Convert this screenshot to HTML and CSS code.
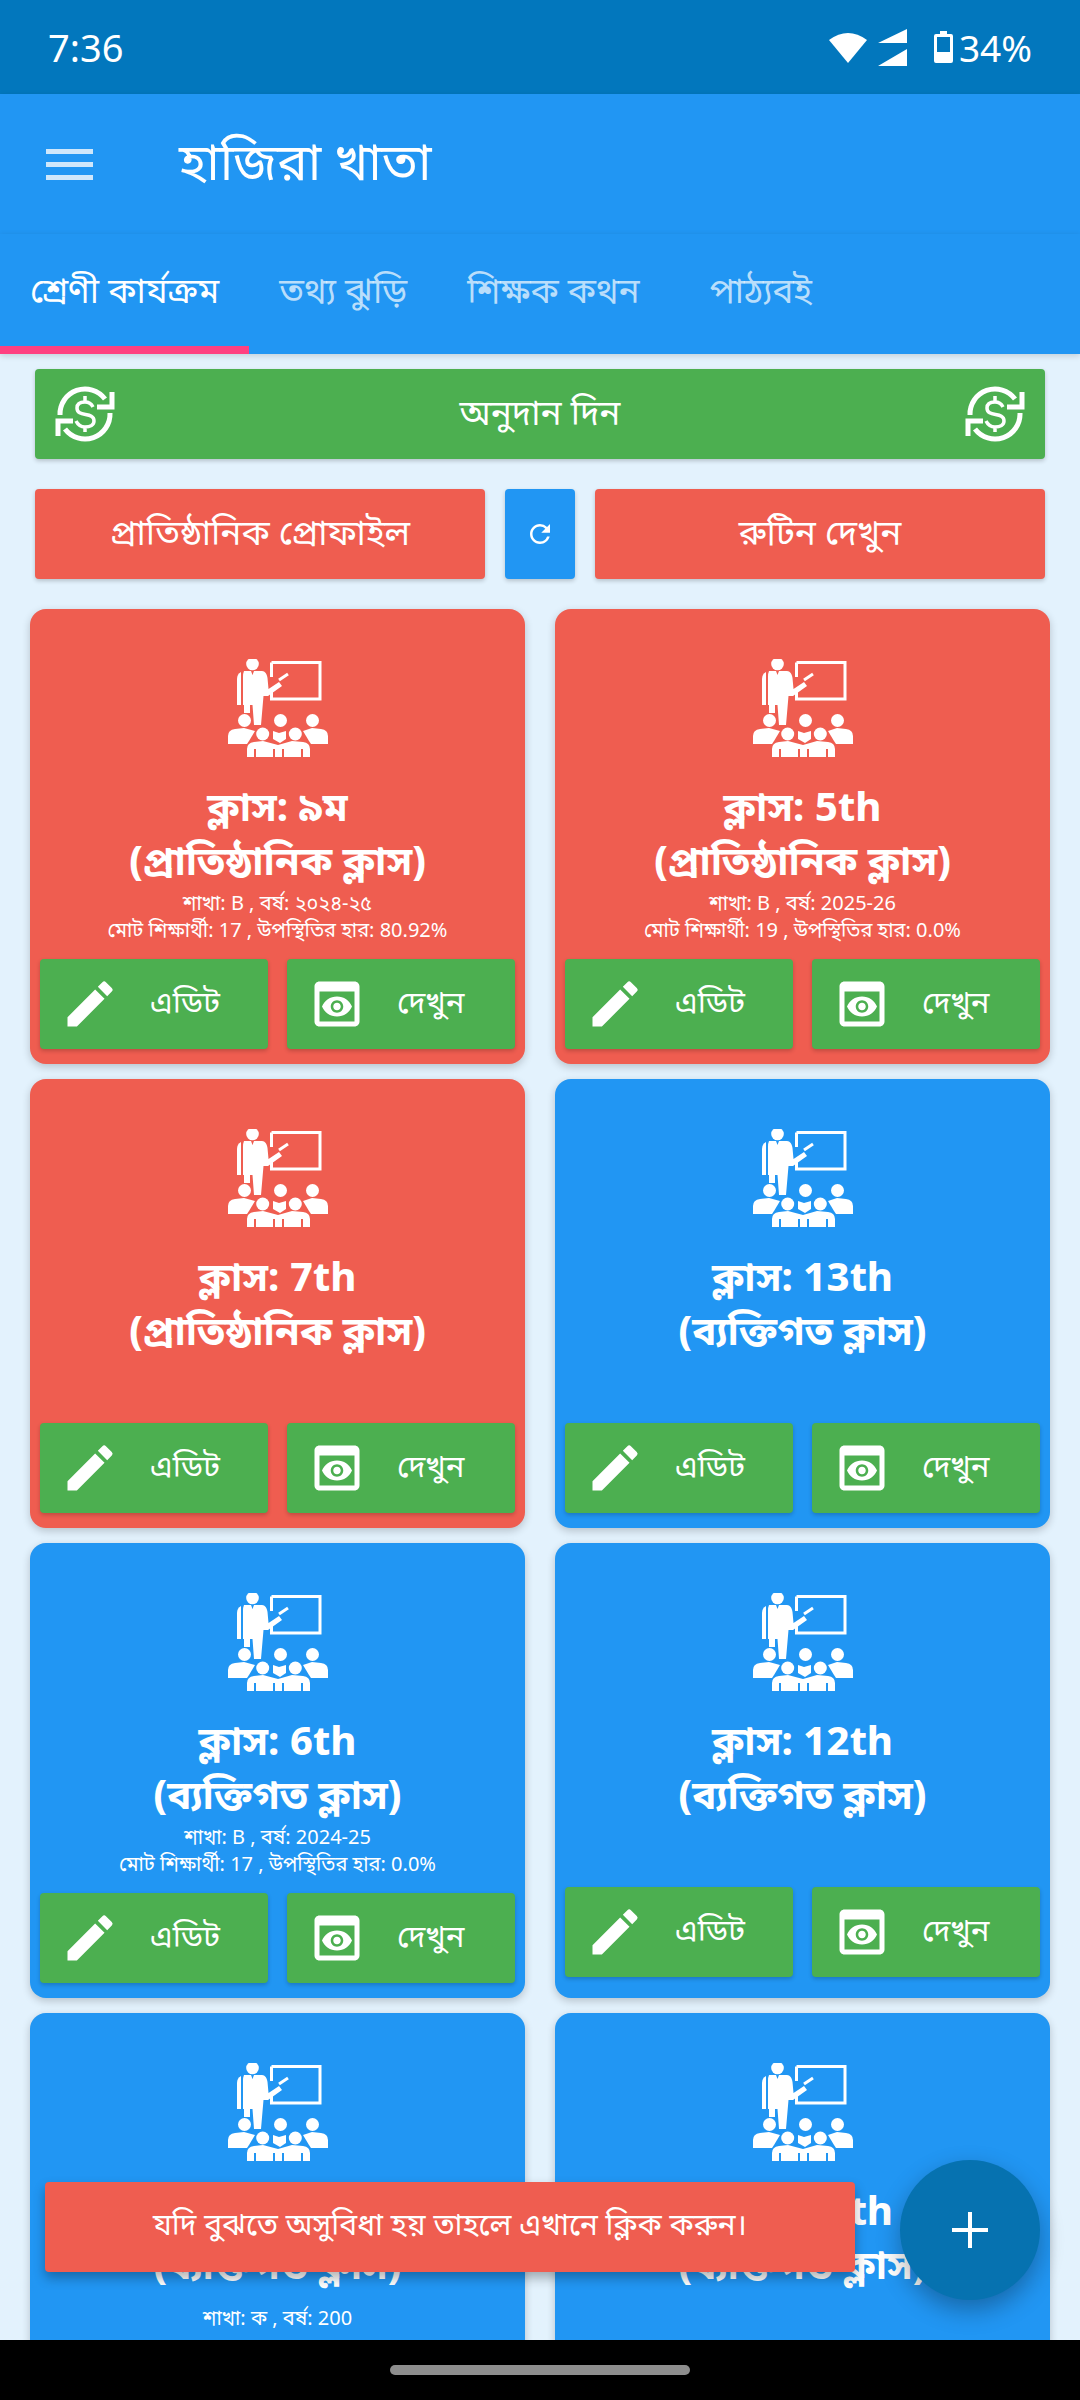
FILE: index.html
```html
<!DOCTYPE html>
<html>
<head>
  <title>হাজিরা খাতা</title>
  <link rel="stylesheet" href="styles.css">
</head>
<body>
  <svg class="defs" width="0" height="0">
    <symbol id="teacher" viewBox="17 20 100 100">
      <circle cx="41.5" cy="25" r="6.3"/>
      <path d="M33 32H40L41.5 36L43 32H51C54 32 56 35 56.500 39L57.500 50L68 43L71 47L57 57H52.500L50 86H43L41.500 66H39V74H33V66H32V38Q32 34 33 32Z"/>
      <path d="M26 40Q26 35 30 33V66H26Z"/>
      <path d="M60.500 23.500H109V60H60.500V53" fill="none" stroke="#fff" stroke-width="3"/>
      <path d="M60.500 23.500V38" fill="none" stroke="#fff" stroke-width="3"/>
      <path d="M68 41L77 35" stroke="#fff" stroke-width="3" fill="none"/>
      <circle cx="33.500" cy="81.500" r="6.500"/>
      <circle cx="69.500" cy="81.500" r="6.500"/>
      <circle cx="101.500" cy="81.500" r="6.500"/>
      <circle cx="51.700" cy="95" r="6.500"/>
      <circle cx="84.300" cy="95" r="6.500"/>
      <path d="M17 105V97Q17 91 24 90L33 89L44 92L38 102L36 105Z"/>
      <path d="M117 105V97Q117 91 110 90L101 89L92 92L98 102L100 105Z"/>
      <path d="M62 92L68 94L75 92L75 100L69 104L62 100Z"/>
      <path d="M36 118V110Q36 104 43 103L52 102L67 106L81 102L92 103Q99 104 99 110V118H92V110H90V118H73V110H71V118H64V110H62V118H45V110H43V118Z"/>
    </symbol>
    <symbol id="donate" viewBox="0 0 60 60">
      <g fill="none" stroke="#fff" stroke-width="5">
        <path d="M5 31A25 25 0 0 1 50 15"/>
        <path d="M55 29A25 25 0 0 1 10 45"/>
        <path d="M57 8V23H42"/>
        <path d="M3 52V37H18"/>
        <path stroke-width="3.500" d="M38 23C36 19 33 18 30 18C25 18 22 20 22 24C22 34 39 27 39 37C39 41 35 43 30 43C26 43 23 41 21 37M30 12V18M30 43V48"/>
      </g>
    </symbol>
    <symbol id="pencil" viewBox="0 0 24 24">
      <path d="M3 17.250V21h3.750L17.810 9.940l-3.750-3.750L3 17.250zM20.710 7.040a.996.996 0 0 0 0-1.410l-2.340-2.340a.996.996 0 0 0-1.410 0l-1.830 1.830 3.750 3.750 1.830-1.830z"/>
    </symbol>
    <symbol id="preview" viewBox="0 0 24 24">
      <path d="M19 3H5c-1.110 0-2 .9-2 2v14c0 1.100.89 2 2 2h14c1.100 0 2-.9 2-2V5c0-1.100-.89-2-2-2zm0 16H5V7h14v12zm-5.500-6c0 .83-.67 1.500-1.500 1.500s-1.500-.67-1.500-1.500.67-1.500 1.500-1.500 1.500.67 1.500 1.500zM12 9c-2.730 0-5.060 1.660-6 4 .94 2.340 3.270 4 6 4s5.060-1.660 6-4c-.94-2.340-3.270-4-6-4zm0 6.500c-1.380 0-2.500-1.120-2.500-2.500s1.120-2.500 2.500-2.500 2.500 1.120 2.500 2.500-1.120 2.500-2.500 2.500z"/>
    </symbol>
  </svg>

  <div class="status-bar">
    <span class="clock">7:36</span>
    <div class="status-icons">
      <svg class="wifi" viewBox="0 0 38 32"><path d="M0 9Q19 -5 38 9L19 32Z"/></svg>
      <svg class="signal" viewBox="0 0 29 37"><path d="M29 0V14H0ZM29 20V37H0Z"/></svg>
      <svg class="battery" viewBox="0 0 19 32"><path d="M6 0H13V3H17Q19 3 19 5V30Q19 32 17 32H2Q0 32 0 30V5Q0 3 2 3H6ZM3 6V21H16V6Z"/></svg>
      <span class="percent">34%</span>
    </div>
  </div>

  <header class="app-bar">
    <div class="burger"><span></span><span></span><span></span></div>
    <h1>হাজিরা খাতা</h1>
  </header>

  <nav class="tabs">
    <a class="tab active">শ্রেণী কার্যক্রম</a>
    <a class="tab">তথ্য ঝুড়ি</a>
    <a class="tab">শিক্ষক কথন</a>
    <a class="tab">পাঠ্যবই</a>
  </nav>

  <main class="content">
    <button class="btn green donate">
      <svg class="donate-icon"><use href="#donate"/></svg>
      <span>অনুদান দিন</span>
      <svg class="donate-icon"><use href="#donate"/></svg>
    </button>

    <div class="top-row">
      <button class="btn red"><span>প্রাতিষ্ঠানিক প্রোফাইল</span></button>
      <button class="btn blue refresh">
        <svg viewBox="0 0 24 24"><path d="M17.650 6.350A7.958 7.958 0 0 0 12 4c-4.420 0-7.990 3.580-7.990 8s3.570 8 7.990 8c3.730 0 6.840-2.550 7.730-6h-2.080A5.990 5.990 0 0 1 12 18c-3.310 0-6-2.690-6-6s2.690-6 6-6c1.660 0 3.140.69 4.220 1.780L13 11h7V4l-2.350 2.350z"/></svg>
      </button>
      <button class="btn red"><span>রুটিন দেখুন</span></button>
    </div>

    <div class="cards">
      <section class="card card-red">
        <svg class="teacher"><use href="#teacher"/></svg>
        <h2>ক্লাস: ৯ম<br>(প্রাতিষ্ঠানিক ক্লাস)</h2>
        <p class="info">শাখা: B , বর্ষ: ২০২৪-২৫<br>মোট শিক্ষার্থী: 17 , উপস্থিতির হার: 80.92%</p>
        <div class="actions">
          <button class="btn green action"><svg><use href="#pencil"/></svg><span>এডিট</span></button>
          <button class="btn green action"><svg><use href="#preview"/></svg><span>দেখুন</span></button>
        </div>
      </section>
      <section class="card card-red">
        <svg class="teacher"><use href="#teacher"/></svg>
        <h2>ক্লাস: 5th<br>(প্রাতিষ্ঠানিক ক্লাস)</h2>
        <p class="info">শাখা: B , বর্ষ: 2025-26<br>মোট শিক্ষার্থী: 19 , উপস্থিতির হার: 0.0%</p>
        <div class="actions">
          <button class="btn green action"><svg><use href="#pencil"/></svg><span>এডিট</span></button>
          <button class="btn green action"><svg><use href="#preview"/></svg><span>দেখুন</span></button>
        </div>
      </section>
      <section class="card card-red">
        <svg class="teacher"><use href="#teacher"/></svg>
        <h2>ক্লাস: 7th<br>(প্রাতিষ্ঠানিক ক্লাস)</h2>
        <div class="actions no-info">
          <button class="btn green action"><svg><use href="#pencil"/></svg><span>এডিট</span></button>
          <button class="btn green action"><svg><use href="#preview"/></svg><span>দেখুন</span></button>
        </div>
      </section>
      <section class="card">
        <svg class="teacher"><use href="#teacher"/></svg>
        <h2>ক্লাস: 13th<br>(ব্যক্তিগত ক্লাস)</h2>
        <div class="actions no-info">
          <button class="btn green action"><svg><use href="#pencil"/></svg><span>এডিট</span></button>
          <button class="btn green action"><svg><use href="#preview"/></svg><span>দেখুন</span></button>
        </div>
      </section>
      <section class="card">
        <svg class="teacher"><use href="#teacher"/></svg>
        <h2>ক্লাস: 6th<br>(ব্যক্তিগত ক্লাস)</h2>
        <p class="info">শাখা: B , বর্ষ: 2024-25<br>মোট শিক্ষার্থী: 17 , উপস্থিতির হার: 0.0%</p>
        <div class="actions">
          <button class="btn green action"><svg><use href="#pencil"/></svg><span>এডিট</span></button>
          <button class="btn green action"><svg><use href="#preview"/></svg><span>দেখুন</span></button>
        </div>
      </section>
      <section class="card">
        <svg class="teacher"><use href="#teacher"/></svg>
        <h2>ক্লাস: 12th<br>(ব্যক্তিগত ক্লাস)</h2>
        <div class="actions no-info">
          <button class="btn green action"><svg><use href="#pencil"/></svg><span>এডিট</span></button>
          <button class="btn green action"><svg><use href="#preview"/></svg><span>দেখুন</span></button>
        </div>
      </section>
      <section class="card card-tail">
        <svg class="teacher"><use href="#teacher"/></svg>
        <h2>ক্লাস: 10th<br>(ব্যক্তিগত ক্লাস)</h2>
        <p class="info info-single">শাখা: ক , বর্ষ: 200</p>
      </section>
      <section class="card card-tail">
        <svg class="teacher"><use href="#teacher"/></svg>
        <h2>ক্লাস: 14th<br>(ব্যক্তিগত ক্লাস)</h2>
      </section>
    </div>
  </main>

  <div class="toast">যদি বুঝতে অসুবিধা হয় তাহলে এখানে ক্লিক করুন।</div>
  <div class="fab"><span></span></div>

  <div class="nav-bar"><span class="pill"></span></div>
</body>
</html>
```
FILE: styles.css
```css
* {
  box-sizing: border-box;
}

html, body {
  margin: 0;
  padding: 0;
}

body {
  position: relative;
  width: 1080px;
  height: 2400px;
  overflow: hidden;
  display: flex;
  flex-direction: column;
  background-color: #E3F2FD;
  color: #fff;
  font-family: "Noto Sans Bengali", "Hind Siliguri", "Noto Sans", Lato, sans-serif;
}

.defs {
  position: absolute;
}

svg {
  fill: #fff;
}

/* status bar */
.status-bar {
  height: 94px;
  flex: none;
  display: flex;
  align-items: center;
  justify-content: space-between;
  padding: 0 48px;
  background-color: #0277BD;
  font-family: "Noto Sans", sans-serif;
  font-size: 38px;
}

.status-icons {
  display: flex;
  align-items: center;
}

.percent {
  font-size: 37px;
}

.wifi {
  width: 38px;
  height: 32px;
  margin-right: 11px;
}

.signal {
  width: 29px;
  height: 37px;
  margin-right: 27px;
}

.battery {
  width: 19px;
  height: 32px;
  margin-right: 6px;
}

/* app bar and tabs */
.app-bar {
  height: 140px;
  flex: none;
  display: flex;
  align-items: center;
  padding-left: 46px;
  background-color: #2196F3;
  box-shadow: 0 2px 6px rgba(0, 0, 0, 0.15);
  position: relative;
}

.burger {
  width: 47px;
  margin-right: 86px;
}

.burger span {
  display: block;
  height: 5px;
  margin: 8px 0;
  background-color: #cfe7fb;
}

h1 {
  margin: 6px 0 0;
  font-size: 51px;
  font-weight: 400;
}

.tabs {
  height: 120px;
  flex: none;
  display: flex;
  background-color: #2196F3;
  box-shadow: 0 2px 6px rgba(0, 0, 0, 0.15);
  position: relative;
}

.tab {
  display: flex;
  align-items: center;
  height: 120px;
  padding: 0 30px 0;
  font-size: 35px;
  color: rgba(255, 255, 255, 0.7);
}

.tab:last-child {
  margin-left: 10px;
}

.tab.active {
  color: #fff;
  border-bottom: 8px solid #FF4081;
  padding-top: 8px;
}

/* buttons */
.btn {
  border: none;
  border-radius: 4px;
  padding: 0;
  color: #fff;
  font-family: inherit;
  font-size: 35px;
  box-shadow: 0 2px 4px rgba(0, 0, 0, 0.2);
}

.btn span {
  position: relative;
  top: 2px;
}

.green {
  background-color: #4CAF50;
}

.red {
  background-color: #EF5D50;
}

.blue {
  background-color: #2196F3;
}

.content {
  flex: 1;
  min-height: 0;
  overflow: hidden;
  padding: 15px 30px 0;
}

.donate {
  width: 1010px;
  height: 90px;
  margin-left: 5px;
  display: flex;
  align-items: center;
  justify-content: space-between;
  padding: 0 20px;
}

.donate-icon {
  width: 60px;
  height: 60px;
}

.top-row {
  width: 1010px;
  margin: 30px 0 30px 5px;
  display: flex;
  gap: 20px;
}

.top-row .btn {
  height: 90px;
  flex: 1;
}

.top-row .refresh {
  flex: none;
  width: 70px;
  display: flex;
  align-items: center;
  justify-content: center;
}

.refresh svg {
  width: 30px;
  height: 30px;
}

/* class cards */
.cards {
  display: grid;
  grid-template-columns: 495px 495px;
  column-gap: 30px;
  row-gap: 15px;
}

.card {
  padding: 50px 10px 15px;
  border-radius: 16px;
  background-color: #2196F3;
  box-shadow: 0 3px 8px rgba(0, 0, 0, 0.2);
  text-align: center;
}

.card-red {
  background-color: #EF5D50;
}

/* last row runs under the nav bar */
.card-tail {
  min-height: 400px;
}

.teacher {
  display: block;
  width: 100px;
  height: 100px;
  margin: 0 auto;
}

h2 {
  margin: 25px 0 0;
  font-size: 40px;
  line-height: 54px;
  font-weight: 700;
}

.info {
  margin: 0;
  font-size: 20px;
  line-height: 27px;
}

.info-single {
  margin-top: 11px;
}

.actions {
  display: flex;
  gap: 19px;
  margin-top: 13px;
}

.actions.no-info {
  margin-top: 61px;
}

.action {
  flex: 1;
  height: 90px;
  display: flex;
  align-items: center;
  padding-left: 20px;
  font-size: 31px;
}

.action svg {
  width: 60px;
  height: 60px;
  margin-right: 30px;
}

.action span {
  top: 1px;
}

/* overlays */
.toast {
  position: absolute;
  left: 45px;
  top: 2182px;
  width: 810px;
  height: 90px;
  display: flex;
  align-items: center;
  justify-content: center;
  border-radius: 4px;
  background-color: #EF5D50;
  font-size: 30px;
  box-shadow: 0 6px 12px rgba(0, 0, 0, 0.3);
}

.fab {
  position: absolute;
  left: 900px;
  top: 2160px;
  width: 140px;
  height: 140px;
  border-radius: 50%;
  background-color: #0672B0;
  box-shadow: 0 10px 24px rgba(0, 0, 0, 0.3);
}

.fab span {
  position: absolute;
  left: 52px;
  top: 68px;
  width: 36px;
  height: 4px;
  background-color: #fff;
}

.fab span::after {
  content: "";
  position: absolute;
  left: 16px;
  top: -16px;
  width: 4px;
  height: 36px;
  background-color: #fff;
}

.nav-bar {
  position: absolute;
  left: 0;
  top: 2340px;
  width: 1080px;
  height: 60px;
  background-color: #000;
}

.pill {
  position: absolute;
  left: 390px;
  top: 25px;
  width: 300px;
  height: 10px;
  border-radius: 5px;
  background-color: #8e8e8e;
}
```
